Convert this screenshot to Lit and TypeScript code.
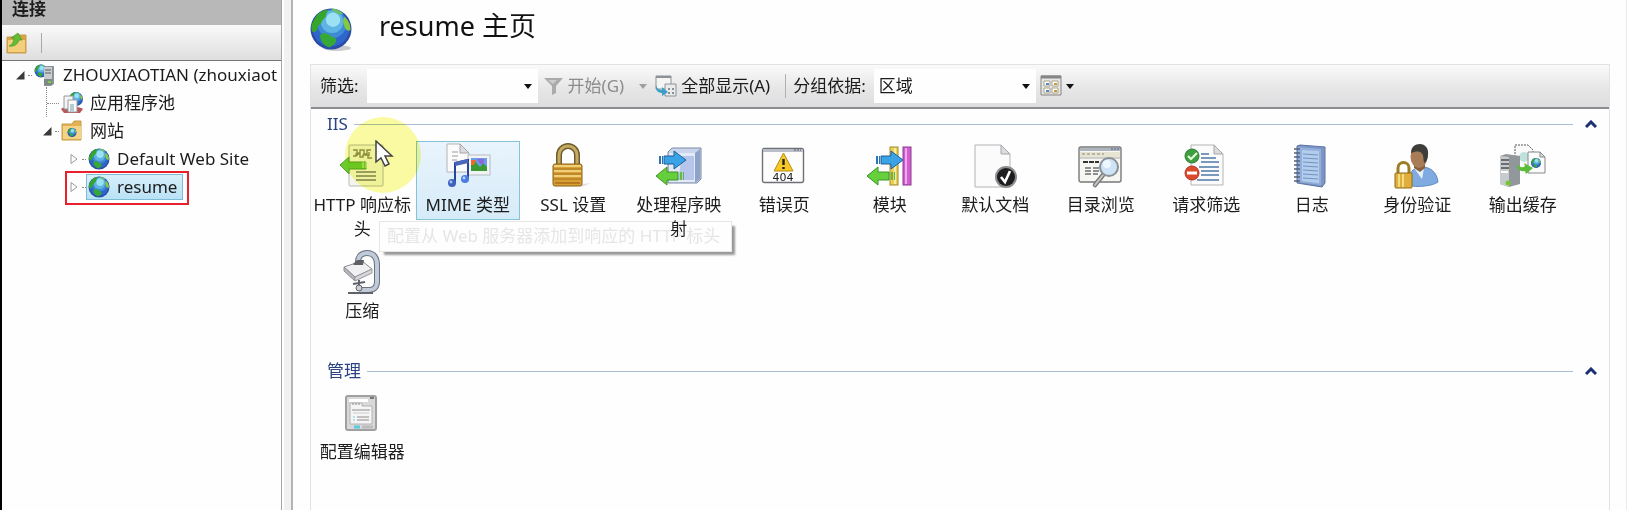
import { LitElement, html, svg, css, nothing } from "lit";
import { customElement, property, state } from "lit/decorators.js";
import { classMap } from "lit/directives/class-map.js";

const globe = (cx: number, cy: number, r: number) => svg`
  <g transform="translate(${cx - r} ${cy - r}) scale(${r / 20})">
    <circle cx="20" cy="20" r="20" fill="#2a4da6" />
    <circle cx="20" cy="19" r="18" fill="#2f66cc" />
    <circle cx="21" cy="15" r="14" fill="#3f8cd6" />
    <circle cx="21" cy="13" r="11" fill="#5fb4e4" />
    <circle cx="22" cy="11" r="7" fill="#9be0f3" />
    <path d="M3 12C6 5 11 2 16 1c2 2-1 4-1 6s-3 3-4 6-4 3-4 6-3 4-5 4C0 19 1 15 3 12z" fill="#35a52c" />
    <path d="M9 26c3-3 8-2 10 0s7 2 6 6-5 4-6 6c-5-1-9-5-10-12z" fill="#35a836" />
    <path d="M33 8c4 3 6 7 6 13-3 2-5-1-6-4s-2-6 0-9z" fill="#86c840" />
    <path d="M20 0c5 0 9 2 12 5-4 2-9-1-12-5z" fill="#6cc06a" />
  </g>`;

const rightArrow = svg`<path d="M8 12h10V7l12 9-12 9v-5H8z" fill="#3aa3e6" stroke="#1f5f9c" />
  <path d="M3 12h2v8H3zM6 12h1v8H6z" fill="#2b74b8" />`;
const leftArrow = svg`<path d="M0 32l11-9v5h11v8H11v5z" fill="#65cf3c" stroke="#3c9428" />
  <path d="M24 28h2v8h-2zM27 28h1v8h-1z" fill="#62b848" />`;
const page = (x: number, y: number, w: number, h: number) => svg`
  <path d="M${x} ${y}h${w - 9}l9 9v${h - 9}h${-w}z" fill="#fbfbfc" stroke="#b4b4b8" />
  <path d="M${x + w - 9} ${y}v9h9z" fill="#dcdcde" stroke="#a6a6aa" />`;
const padlock = svg`
  <path d="M9 22V11a9 9 0 0 1 18 0v11" fill="none" stroke="#6f5c2c" stroke-width="6" />
  <path d="M9 22V11a9 9 0 0 1 18 0v11" fill="none" stroke="#c5ab62" stroke-width="3" />
  <path d="M32 40l9-1-9 4z" fill="#e2e2e2" />
  <rect x="3" y="20" width="29" height="22" rx="2" fill="#d6a037" stroke="#8a6118" />
  <path d="M4 25h27M4 30h27M4 35h27" stroke="#a8721d" />
  <path d="M4 22h27M4 27h27M4 32h27" stroke="#f0cf78" stroke-width="2" />
  <path d="M5 39h25" stroke="#b77a1e" stroke-width="2" />`;

const icons: Record<string, unknown> = {
  headers: svg`
    <rect x="10" y="1" width="34" height="41" rx="1" fill="#f4f6ee" stroke="#b8bcae" />
    <path d="M14 6h4v3h3V6h4v4h3V6h4M14 12h3v-2h4v3h3v-2h5v3h4M18 9v3M30 8v4" fill="none" stroke="#8f8f5c" stroke-width="1.4" />
    <path d="M1 21l9-8v5h17v7H10v5z" fill="#6ccb2f" stroke="#52a026" />
    <path d="M24 18v6M27 18v6" stroke="#d4f3a0" />
    <path d="M17 28h20M17 32h20M17 36h20" stroke="#7f8474" stroke-width="1.6" />`,
  mime: svg`
    ${page(2, 0, 22, 28)}
    <path d="M7 8h6M7 12h6M7 16h5" stroke="#9c9ca2" />
    <rect x="23" y="11" width="22" height="20" fill="#f2f4f4" stroke="#b4bac2" />
    <rect x="26" y="14" width="16" height="13" fill="#6b9cf0" />
    <path d="M26 27v-7l4-3 5 6 3-4 4 4v4z" fill="#3b9a34" />
    <path d="M26 16h5l-2 5h-3z" fill="#ee6a2c" /><path d="M32 15h7v5h-4z" fill="#8d66d8" />
    <path d="M10 39V19l13-3v20" fill="none" stroke="#27459c" stroke-width="2" />
    <path d="M10 20l13-3" stroke="#4a66b8" stroke-width="4" />
    <ellipse cx="7" cy="39" rx="4" ry="4" fill="#3f63bc" /><ellipse cx="20" cy="35" rx="4" ry="4" fill="#4a7be0" />
    <circle cx="6" cy="38" r="1.4" fill="#a7c6ff" /><circle cx="19" cy="34" r="1.4" fill="#bcd6ff" />`,
  ssl: padlock,
  handler: svg`
    <path d="M12 8l4-4h29v31l-4 4H12z" fill="#c9d5ec" stroke="#7d8aa4" />
    <path d="M13 9h26v29H13z" fill="#e2eaf7" /><path d="M39 9l5-4v30l-5 4z" fill="#8fa3c8" />
    <path d="M26 12h12v24H22z" fill="#b5c6ea" />${rightArrow}${leftArrow}`,
  error: svg`
    <rect x="1.5" y="4.5" width="41" height="34" rx="2" fill="#fdfdfd" stroke="#6e7076" stroke-width="1.4" />
    <path d="M2 5h40v3H2z" fill="#b9bdc8" /><path d="M33 6h7" stroke="#55585f" stroke-dasharray="2 1" />
    <path d="M22.500 9L32 27H13z" fill="#f7c823" stroke="#b58c18" stroke-linejoin="round" />
    <path d="M22.500 15v6M22.500 23v2" stroke="#222" stroke-width="2.4" />
    <text x="22" y="37" text-anchor="middle" class="code">404</text>`,
  module: svg`
    <rect x="23" y="3" width="8" height="38" fill="#ecd056" stroke="#9e8a2c" />
    <path d="M28 4v36" stroke="#f7eda0" stroke-width="2" />
    <g transform="translate(6 0)">${rightArrow}</g>
    <rect x="36" y="3" width="8" height="38" fill="#cf5fce" stroke="#8b3a90" />
    <path d="M39 4v36" stroke="#efa8ee" stroke-width="2" />${leftArrow}`,
  document: svg`
    ${page(3, 1, 35, 42)}
    <circle cx="34" cy="33" r="11" fill="#8d8d90" /><circle cx="34" cy="33" r="9" fill="#1d1d1f" />
    <path d="M29 33l4 5 5-11" fill="none" stroke="#fff" stroke-width="2.6" />`,
  browse: svg`
    <rect x="1" y="3" width="42" height="35" rx="2" fill="#f6f6f3" stroke="#77797a" stroke-width="1.4" />
    <path d="M2 4h40v3H2z" fill="#aeb4bc" /><path d="M33 5h8" stroke="#4b5c8c" stroke-dasharray="2 1" />
    <path d="M2 8h40v5H2z" fill="#e7e5d2" /><path d="M4 10h22" stroke="#85867c" stroke-dasharray="3 2" />
    <path d="M2 14h40" stroke="#a8a8a4" /><path d="M5 18h16" stroke="#333" stroke-width="2" stroke-dasharray="5 1" />
    <path d="M7 24h6M7 27h6M7 30h6M15 24h6M15 27h6M15 30h5" stroke="#6d6f70" stroke-width="1.4" />
    <path d="M25 31l-8 10" stroke="#777" stroke-width="4.500" stroke-linecap="round" />
    <path d="M25 31l-8 10" stroke="#c9c9c9" stroke-width="2" stroke-linecap="round" />
    <circle cx="31" cy="23" r="9" fill="#cfe3f6" stroke="#8b9097" stroke-width="2" /><circle cx="29" cy="20" r="4" fill="#eef7ff" />`,
  filter: svg`
    ${page(8, 1, 32, 40)}
    <path d="M18 10h8M18 14h15M18 18h18M16 23h20M18 27h18M18 31h18M14 36h22" stroke="#4d79a6" stroke-width="1.600" />
    <circle cx="9" cy="12" r="7" fill="#3e9f40" stroke="#2e7a33" /><path d="M5 12l3 3 6-6" fill="none" stroke="#e2ffd8" stroke-width="2.200" />
    <circle cx="9" cy="29" r="7" fill="#dc4a2c" stroke="#ae3420" /><path d="M4 29h10" stroke="#fff" stroke-width="3" />`,
  log: svg`
    <path d="M8 2l3-1 25 2v36l-3 4-25-4z" fill="#7c95c4" stroke="#5c74a6" />
    <path d="M9 3l23 2v36L9 38z" fill="#93afdb" /><path d="M13 6l17 1v32l-17-2z" fill="#b4cdec" />
    <path d="M14 10l15 1M14 14l15 1M14 18l15 1M14 22l15 1M14 26l15 1M14 30l15 1M14 34l15 1" stroke="#6f93c4" />
    <path d="M5 5h6M5 9h6M5 13h6M5 17h6M5 21h6M5 25h6M5 29h6M5 33h6M5 37h6" stroke="#54607a" stroke-width="1.500" />`,
  auth: svg`
    <path d="M14 41c0-12 5-18 14-18s15 6 16 15c-5 4-22 6-30 3z" fill="#7fabe0" stroke="#5e8ac0" />
    <path d="M20 24h10l-2 11z" fill="#e9f2fb" /><path d="M20 18h11v6l-5 4-6-4z" fill="#87603f" />
    <ellipse cx="25" cy="13" rx="8.500" ry="11" fill="#a87c56" />
    <path d="M17 9c0-6 4-9 9-9s9 4 8 11c0 4-2 7-4 8-1-6 0-9-4-11-3-1-6 0-9 1z" fill="#3f3d39" />
    <path d="M4 30v-6a5 5 0 0 1 11 0v6" fill="none" stroke="#9c7d23" stroke-width="3" />
    <rect x="1" y="29" width="17" height="15" rx="1" fill="#dfae3c" stroke="#926c18" />
    <path d="M5 30v13M9 30v13" stroke="#f4dc83" stroke-width="2" />`,
  output: svg`
    <path d="M15 1h13l5 5v19H15z" fill="#fafafa" stroke="#555" stroke-dasharray="2 1" />
    <circle cx="24" cy="13" r="5" fill="#bfe3dc" />
    <path d="M0 12l6-2 14 2v28l-11 3-9-3z" fill="#92979c" /><path d="M0 12l9 1v30l-9-3z" fill="#c8cbce" />
    <path d="M1 16h8M1 20h8M1 24h8" stroke="#4b4f54" stroke-width="1.600" /><path d="M1 28h7" stroke="#fff" stroke-width="2" />
    <circle cx="8" cy="39" r="2.500" fill="#76c832" />
    <path d="M28 8h12l5 5v16H28z" fill="#fbfbfb" stroke="#85888a" /><path d="M40 8v5h5z" fill="#ddd" stroke="#85888a" />
    ${globe(36, 19, 5)}
    <path d="M17 20c3 4 6 4 8 2l-1-3 9 5-7 6-1-3c-5 1-8-2-8-7z" fill="#5abc38" />`,
  compress: svg`
    <path d="M19 12c0-6 4-9 9-9 7 0 10 5 10 12v17c0 5-3 8-8 8H20" fill="none" stroke="#69727f" stroke-width="6" />
    <path d="M19 12c0-6 4-9 9-9 7 0 10 5 10 12v17c0 5-3 8-8 8H20" fill="none" stroke="#c0cad8" stroke-width="4" />
    <path d="M5 17l18-6 10 8-17 8z" fill="#f0f0f2" stroke="#8b8d92" /><path d="M5 17l11 10v4L5 21z" fill="#b8b8bc" stroke="#8b8d92" />
    <path d="M16 27l17-8v4l-17 8z" fill="#d6d6da" stroke="#999b9f" />
    <path d="M14 14l4-4h7l-1 5h-9z" fill="#5e6066" /><path d="M20 30v10M14 34l12-2M9 43h25" stroke="#5f6268" stroke-width="2" />
    <circle cx="20" cy="38" r="3" fill="#cfcfd3" stroke="#5f6268" />`,
  config: svg`
    <rect x="7" y="5" width="30" height="34" rx="2" fill="#d9d9d9" stroke="#a0a0a0" stroke-width="2" />
    <path d="M10 8h19v3H10z" fill="#fff" /><path d="M31 7h4" stroke="#555" stroke-width="1.500" />
    <path d="M11 12h12v3h10v18H11z" fill="#f5f5f5" stroke="#b2b2b2" /><path d="M13 13h9" stroke="#888" stroke-dasharray="2 1" />
    <path d="M13 19h18M18 26h12M18 29h12" stroke="#8c8c8c" /><path d="M14 26h2M14 29h2" stroke="#7ec9dd" />
    <path d="M14 22h16" stroke="#ccc" /><path d="M15 36h6" stroke="#5bcbe2" stroke-width="3" /><path d="M23 36h11" stroke="#bbb" stroke-width="3" />`,
};

const treeIcons: Record<string, unknown> = {
  server: svg`${globe(7, 7, 6.500)}<path d="M10 3l3-1h7v18l-3 2h-7z" fill="#8e9296" />
    <path d="M10 3h8v18h-8z" fill="#c9ccce" /><path d="M11 6h6M11 9h6" stroke="#5d6064" /><path d="M10 15h8v6h-8z" fill="#7c8a80" /><path d="M14 18h3" stroke="#7ed04a" stroke-width="2" />`,
  pool: svg`${globe(15, 7, 7)}<path d="M0 17c2-3 19-3 22 0l-3 4H3z" fill="#b9575a" />
    <path d="M3 4h9v13H3z" fill="#f4f4f4" stroke="#9a9a9a" /><path d="M7 8h9v12H7z" fill="#fafafa" stroke="#9a9a9a" /><path d="M9 12h4v8H9z" fill="#b4ccd4" />`,
  folder: svg`<path d="M1 4h10l2-3h7v19H1z" fill="#e3b152" stroke="#c79d4c" /><path d="M2 6h18v13H2z" fill="#f5d384" />
    ${globe(11, 12.500, 4.500)}`,
  site: svg`${globe(11, 11, 10.500)}`,
};

const base = css`
  :host { font-family: "Noto Sans", "Noto Sans CJK SC", sans-serif; font-size: 17px; line-height: 24px; color: #1c1c1c; }
  * { box-sizing: border-box; }
  button, input, select { font: inherit; color: inherit; border: 0; background: none; padding: 0; margin: 0; }
  svg { display: block; flex: none; }
`;

@customElement("feature-tile")
class FeatureTile extends LitElement {
  @property() label = "";
  @property() icon = "";
  @property({ type: Boolean }) active = false;
  static styles = [base, css`
    :host { display: block; min-height: 79px; align-self: start; position: relative; z-index: 2; }
    .tile { display: flex; flex-direction: column; align-items: center; gap: 3px; width: 100%; min-height: 79px; padding: 2px 1px; border: 1px solid transparent; text-align: center; }
    .active { border-color: #86c3d6; background: linear-gradient(#e9f4fd, #d6ebf8); }
    .label { width: 100%; word-break: break-all; }
    .code { font: 11px "DejaVu Sans", sans-serif; fill: #222; }
  `];
  render() {
    return html`<button class=${classMap({ tile: true, active: this.active })}>
      <svg width="46" height="46" viewBox="0 0 46 46" overflow="visible" aria-hidden="true">${icons[this.icon]}</svg>
      <span class="label">${this.label}</span>
    </button>`;
  }
}

@customElement("feature-group")
class FeatureGroup extends LitElement {
  @property() heading = "";
  @property({ attribute: false }) items: [string, string][] = [];
  @property() active = "";
  @state() open = true;
  static styles = [base, css`
    :host { display: block; }
    .head { display: flex; align-items: center; gap: 6px; height: 24px; padding: 0 6px 0 17px; }
    h2 { margin: 0; font-size: 17px; font-weight: 400; color: #2a4385; }
    .rule { flex: 1; height: 1px; background: #a9bdd4; }
    .toggle { display: grid; place-items: center; width: 24px; height: 20px; }
    .grid { display: grid; grid-template-columns: repeat(auto-fill, minmax(104px, 1fr)); gap: 3px 1px; padding: 5px 34px 0 0; }
  `];
  render() {
    return html`<section>
      <div class="head">
        <h2>${this.heading}</h2><span class="rule"></span>
        <button class="toggle" aria-label=${this.heading} aria-expanded=${this.open} @click=${() => (this.open = !this.open)}>
          <svg width="12" height="8" viewBox="0 0 12 8"><path d="M1 7l5-5 5 5" fill="none" stroke="#1b2f74" stroke-width="3" /></svg>
        </button>
      </div>
      ${this.open ? html`<div class="grid">${this.items.map(([label, icon]) =>
        html`<feature-tile .label=${label} .icon=${icon} ?active=${label === this.active}></feature-tile>`)}</div>` : nothing}
    </section>`;
  }
}

interface Node { label: string; icon: string; state: "open" | "closed" | "leaf"; selected?: boolean; children?: Node[]; }

const tree: Node[] = [{
  label: "ZHOUXIAOTIAN (zhouxiaot", icon: "server", state: "open", children: [
    { label: "应用程序池", icon: "pool", state: "leaf" },
    { label: "网站", icon: "folder", state: "open", children: [
      { label: "Default Web Site", icon: "site", state: "closed" },
      { label: "resume", icon: "site", state: "closed", selected: true },
    ] },
  ],
}];

@customElement("connection-panel")
class ConnectionPanel extends LitElement {
  static styles = [base, css`
    :host { display: block; width: 280px; flex: none; overflow: hidden; border-right: 1px solid #a6a6a6; background: #fefefe; }
    h2 { margin: 0; height: 25px; padding: 0 0 0 10px; font-size: 17px; line-height: 18px; font-weight: 700; background: #b8b8b8; }
    .bar { display: flex; align-items: center; gap: 13px; height: 36px; padding: 0 4px; background: linear-gradient(#fafafa, #dedede); border-bottom: 1px solid #76767a; }
    .sep { width: 1px; height: 20px; background: #a9a9a9; }
    ul { list-style: none; margin: 0; padding: 0; }
    .root { padding: 0 0 0 11px; }
    ul ul { padding-left: 27px; }
    .row { display: flex; align-items: center; height: 28px; position: relative; width: max-content; }
    .twist { display: grid; place-items: center; width: 14px; height: 20px; }
    .dash { width: 4px; border-top: 1px dotted #888; margin-left: 1px; }
    .leaf .twist { visibility: hidden; }
    .leaf .dash { width: 12px; margin-left: -7px; }
    .leaf::before { content: ""; position: absolute; left: 6px; top: -2px; height: 30px; border-left: 1px dotted #888; }
    .name { display: flex; align-items: center; gap: 7px; height: 26px; padding: 0 5px 0 1px; border: 1px solid transparent; color: inherit; text-decoration: none; white-space: nowrap; }
    .selected .name { background: linear-gradient(#d8effa, #b9e2f5); border-color: #7cbdd4; }
    .selected::after { content: ""; position: absolute; inset: -2px -6px -4px -2px; border: 2px solid #e8202c; pointer-events: none; }
  `];
  branch(nodes: Node[], root = false): unknown {
    return html`<ul class=${root ? "root" : "sub"}>${nodes.map((n) => html`<li>
      <div class=${classMap({ row: true, leaf: n.state === "leaf", selected: !!n.selected })}>
        <button class="twist" aria-label=${n.label}>${n.state === "open"
          ? html`<svg width="9" height="9" viewBox="0 0 9 9"><path d="M8.500 0v8.500H0z" fill="#3a3a3a" /></svg>`
          : html`<svg width="8" height="12" viewBox="0 0 8 12"><path d="M1 1.500l6 4.500-6 4.500z" fill="#fff" stroke="#9a9a9a" /></svg>`}</button>
        <span class="dash"></span>
        <a class="name" href="#"><svg width="22" height="22" viewBox="0 0 22 22" aria-hidden="true">${treeIcons[n.icon]}</svg>${n.label}</a>
      </div>
      ${n.children ? this.branch(n.children) : nothing}
    </li>`)}</ul>`;
  }
  render() {
    return html`<h2>连接</h2>
      <div class="bar">
        <button aria-label="连接"><svg width="22" height="22" viewBox="0 0 22 22"><path d="M1 5h8l2-2h9v18H1z" fill="#d5a544" stroke="#c79d4c" />
          <path d="M2 8h17v12H2z" fill="#f3cf7c" /><path d="M3 14c3-1 5-4 5-8H5l7-5 4 7h-3c-1 4-5 7-10 6z" fill="#62bf35" stroke="#3e8b24" stroke-width=".6" /></svg></button>
        <span class="sep"></span>
      </div>
      ${this.branch(tree, true)}`;
  }
}

@customElement("app-root")
class AppRoot extends LitElement {
  iis: [string, string][] = [
    ["HTTP 响应标头", "headers"], ["MIME 类型", "mime"], ["SSL 设置", "ssl"], ["处理程序映射", "handler"],
    ["错误页", "error"], ["模块", "module"], ["默认文档", "document"], ["目录浏览", "browse"],
    ["请求筛选", "filter"], ["日志", "log"], ["身份验证", "auth"], ["输出缓存", "output"], ["压缩", "compress"],
  ];
  manage: [string, string][] = [["配置编辑器", "config"]];
  static styles = [base, css`
    :host { display: flex; min-height: 100vh; border-left: 2px solid #000; background: #fefefe; overflow: hidden; }
    .split { flex: none; width: 11px; background: #f1f1f1; border-left: 2px solid #fff; border-right: 2px solid #b4b4b4; }
    main { flex: 1; min-width: 0; display: flex; flex-direction: column; padding: 0 16px 0 17px; border-right: 1px solid #ececee; }
    header { display: flex; gap: 25px; height: 64px; padding-top: 7px; }
    h1 { margin: 0; font-size: 27px; line-height: 38px; font-weight: 400; color: #111; }
    .panel { flex: 1; position: relative; border: 1px solid #e2e2e2; border-bottom: 0; }
    .bar { display: flex; align-items: center; height: 44px; padding-left: 9px; background: linear-gradient(#fafafa, #e6e5e6 60%, #dedddf); border-bottom: 2px solid #8e8c90; white-space: nowrap; }
    .combo { display: flex; align-items: center; height: 34px; background: #fefefe; position: relative; }
    .filter { width: 171px; margin: 0 6px 0 8px; }
    .filter input { flex: 1; min-width: 0; height: 100%; padding-left: 6px; outline: none; }
    .arrow { display: grid; place-items: center; width: 20px; height: 24px; }
    .cmd { display: flex; align-items: center; gap: 4px; height: 24px; }
    .off { color: #8c8c8c; }
    .split-arrow { margin: 0 2px 0 9px; }
    .sep { width: 1px; height: 24px; margin: 0 7px 0 15px; background: #b0b0b0; }
    .by { width: 162px; margin: 0 4px 0 8px; }
    .by select { width: 100%; height: 100%; padding-left: 5px; appearance: none; outline: none; }
    .by .arrow { position: absolute; right: 0; pointer-events: none; }
    .groups { display: flex; flex-direction: column; gap: 33px; padding-top: 3px; margin-left: -1px; }
    .tip { position: absolute; z-index: 1; left: 68px; top: 156px; height: 31px; padding: 2px 11px 2px 7px; width: max-content; background: #fefefe; border: 1px solid #e6e6e6; box-shadow: 4px 4px 2px -1px #999; color: #e6e6e6; white-space: nowrap; }
    .halo { position: absolute; z-index: 3; left: 34px; top: 52px; width: 76px; height: 76px; border-radius: 50%; background: #fbfba4; mix-blend-mode: multiply; pointer-events: none; }
    .cursor { position: absolute; z-index: 4; left: 64px; top: 75px; pointer-events: none; }
  `];
  caret(color = "#111") {
    return html`<svg width="8" height="5" viewBox="0 0 8 5" aria-hidden="true"><path d="M0 0h8L4 5z" fill=${color} /></svg>`;
  }
  render() {
    return html`
      <connection-panel></connection-panel>
      <div class="split"></div>
      <main>
        <header>
          <svg width="44" height="46" viewBox="0 0 44 46" aria-hidden="true"><ellipse cx="27" cy="41" rx="14" ry="3" fill="#ccc" />${globe(21, 22, 20.500)}</svg>
          <h1>resume 主页</h1>
        </header>
        <div class="panel">
          <div class="bar">
            <label for="filter">筛选:</label>
            <div class="combo filter"><input id="filter" type="text" /><button class="arrow" aria-label="筛选">${this.caret()}</button></div>
            <button class="cmd off"><svg width="20" height="20" viewBox="0 0 20 20"><path d="M0 2h19l-7 8v7l-4 2V10z" fill="#aaa" /><path d="M4 4h9l-4 4z" fill="#ccc" /></svg>开始(G)</button>
            <button class="arrow split-arrow" aria-label="开始">${this.caret("#a0a0a0")}</button>
            <button class="cmd"><svg width="22" height="22" viewBox="0 0 22 22"><path d="M1 1h15v13H1z" fill="#f5f5f5" stroke="#8d9296" /><path d="M1 2h15" stroke="#8d9296" stroke-width="2" />
              <path d="M10 9h11v12H10z" fill="#e9ebed" stroke="#8d9296" /><path d="M13 14h2M17 14h2M13 18h2M17 18h2" stroke="#6d7276" stroke-width="1.500" /><path d="M1 10c1 4 3 5 6 5v-3l6 5-6 4v-3c-4 0-7-3-6-8z" fill="#3c9fc8" /></svg>全部显示(A)</button>
            <span class="sep"></span>
            <label for="group">分组依据:</label>
            <div class="combo by"><select id="group"><option>区域</option></select><span class="arrow">${this.caret()}</span></div>
            <button class="cmd" aria-label="视图"><svg width="22" height="22" viewBox="0 0 22 22"><path d="M1 1h20v19H1z" fill="#e6e6e2" stroke="#858585" /><path d="M1 2h20" stroke="#858585" stroke-width="3" />
              <path d="M4 6h6v5H4zM12 6h6v5h-6zM4 13h6v5H4zM12 13h6v5h-6z" fill="#fff" stroke="#a9a48c" /><path d="M6 9h3M6 16h3" stroke="#5a84c4" stroke-width="2" /><path d="M14 9h3M14 16h3" stroke="#c49a4c" stroke-width="2" /></svg>${this.caret()}</button>
          </div>
          <div class="groups">
            <feature-group heading="IIS" .items=${this.iis} active="MIME 类型"></feature-group>
            <feature-group heading="管理" .items=${this.manage}></feature-group>
          </div>
          <div class="tip" role="tooltip">配置从 Web 服务器添加到响应的 HTTP 标头</div>
          <span class="halo"></span>
          <svg class="cursor" width="20" height="28" viewBox="0 0 20 28" aria-hidden="true"><path d="M1 1v21l5-4 4 8 4-2-4-8h7z" fill="#fff" stroke="#444" stroke-width="1.500" /></svg>
        </div>
      </main>`;
  }
}
